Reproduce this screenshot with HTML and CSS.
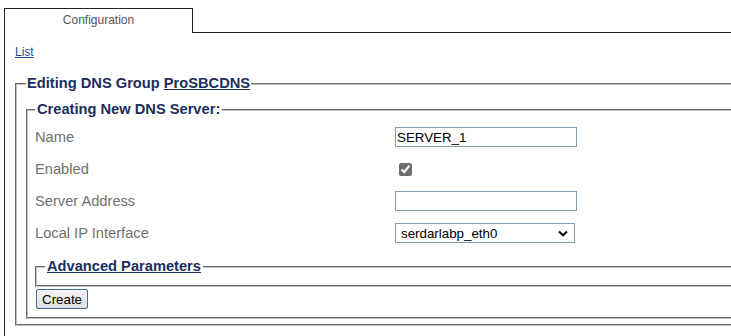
FILE: index.html
```html
<!DOCTYPE html>
<html lang="en">
<head>
    <meta charset="UTF-8">
    <meta name="viewport" content="width=device-width, initial-scale=1.0">
    <title>DNS Server Configuration</title>
    <link rel="stylesheet" href="styles.css">
</head>
<body>
    <div class="page">
        <div class="tabs">
            <div class="tab">Configuration</div>
            <div class="tab-fill"></div>
        </div>
        <div class="panel">
            <a class="list-link" href="#">List</a>

            <fieldset class="group">
                <legend>Editing DNS Group <a href="#">ProSBCDNS</a></legend>

                <fieldset class="server">
                    <legend>Creating New DNS Server:</legend>
                    <table class="form-table">
                        <tr>
                            <td class="label">Name</td>
                            <td><input type="text" class="text-input" value="SERVER_1"></td>
                        </tr>
                        <tr>
                            <td class="label">Enabled</td>
                            <td><input type="checkbox" class="check" checked></td>
                        </tr>
                        <tr>
                            <td class="label">Server Address</td>
                            <td><input type="text" class="text-input" value=""></td>
                        </tr>
                        <tr>
                            <td class="label">Local IP Interface</td>
                            <td>
                                <div class="select-wrap">
                                    <select class="select">
                                        <option>serdarlabp_eth0</option>
                                    </select>
                                    <svg class="chevron" width="10" height="7" viewBox="0 0 10 7">
                                        <path d="M1 1.5 L5 5.2 L9 1.5" fill="none" stroke="#111" stroke-width="2.2"/>
                                    </svg>
                                </div>
                            </td>
                        </tr>
                    </table>

                    <fieldset class="advanced">
                        <legend><a href="#">Advanced Parameters</a></legend>
                    </fieldset>

                    <button type="button" class="create-btn">Create</button>
                </fieldset>
            </fieldset>
        </div>
    </div>
</body>
</html>
```

FILE: styles.css
```css
html, body {
    overflow: hidden;
}
body {
    margin: 0;
    font-family: "Liberation Sans", Arial, sans-serif;
    background-color: #ffffff;
}
.page {
    margin: 8px 0 0 4px;
    width: 820px;
    height: 340px;
    border-left: 1px solid #222;
}
.tabs {
    display: flex;
}
.tab {
    width: 187px;
    height: 20px;
    padding-top: 4px;
    border-top: 1px solid #222;
    border-right: 1px solid #222;
    text-align: center;
    font-size: 12px;
    line-height: 14px;
    color: #555;
}
.tab-fill {
    flex: 1;
    height: 24px;
    border-bottom: 1px solid #222;
}
.panel {
    padding: 12px 0 0 10px;
}
.list-link {
    display: block;
    font-size: 12px;
    line-height: 14px;
    color: #1a4f8f;
    width: max-content;
}
fieldset {
    margin: 0;
    border: 2px groove #c0c0c0;
    min-width: 0;
}
legend {
    font-size: 11pt;
    font-weight: bold;
    line-height: 17px;
    color: #1b2e5e;
    padding: 0 1px;
}
legend a {
    color: #1b2e5e;
}
.group {
    margin-top: 16px;
    padding: 9px 9px 5px 9px;
}
.server {
    padding: 3px 7px 8px 7px;
}
.server > legend {
    padding: 0 2px;
}
.form-table {
    border-spacing: 0;
}
.form-table td {
    padding: 0;
    height: 32px;
    vertical-align: middle;
}
.label {
    width: 360px;
    font-size: 11pt;
    color: #707070;
}
.text-input {
    display: block;
    width: 182px;
    height: 20px;
    box-sizing: border-box;
    margin: 0;
    padding: 0 1px;
    border: 1px solid #7f9db9;
    font-family: "Liberation Sans", Arial, sans-serif;
    font-size: 13.33px;
    color: #000;
}
.check {
    display: block;
    margin: 3px 3px 3px 4px;
    width: 13px;
    height: 13px;
    accent-color: #6e6e6e;
}
.select-wrap {
    position: relative;
    width: 180px;
}
.select {
    display: block;
    width: 180px;
    height: 20px;
    box-sizing: border-box;
    margin: 0;
    padding: 0 0 0 5px;
    appearance: none;
    background: #fff;
    border: 1px solid #7f9db9;
    border-radius: 0;
    font-family: "Liberation Sans", Arial, sans-serif;
    font-size: 13.33px;
    color: #000;
}
.chevron {
    position: absolute;
    right: 7px;
    top: 7px;
    pointer-events: none;
}
.advanced {
    margin-top: 9px;
    padding: 0 7px 10px 8px;
}
.advanced > legend {
    padding: 0 2px;
}
.create-btn {
    display: block;
    margin: 2px 0 0 1px;
    height: 20px;
    padding: 0 5px;
    font-family: "Liberation Sans", Arial, sans-serif;
    font-size: 13.33px;
    color: #000;
    background: linear-gradient(#f4f4f4, #dddddd);
    border: 1px solid #3d6e9c;
    border-radius: 2px;
}
```
